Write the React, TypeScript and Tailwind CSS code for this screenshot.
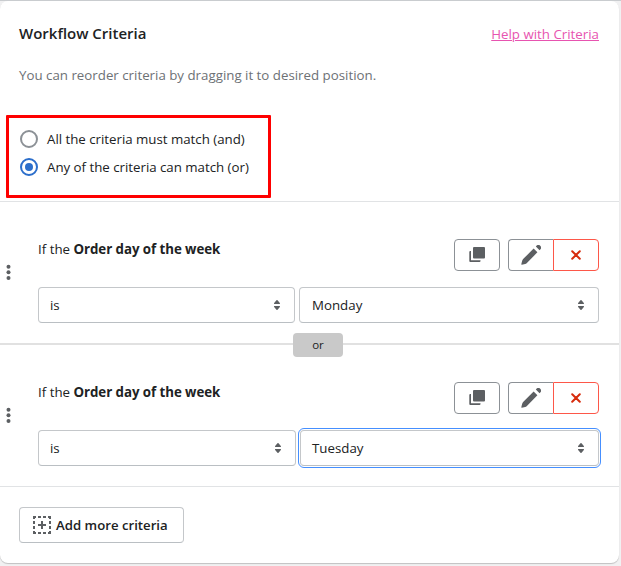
import clsx from 'clsx';

const criteria = [
  { id: 1, field: 'Order day of the week', operator: 'is', value: 'Monday', focused: false },
  { id: 2, field: 'Order day of the week', operator: 'is', value: 'Tuesday', focused: true },
];

const matchOptions = [
  { label: 'All the criteria must match (and)', checked: false },
  { label: 'Any of the criteria can match (or)', checked: true },
];

function DuplicateIcon() {
  return (
    <svg className="w-4 h-4" viewBox="0 0 16 16" fill="#5c5f62">
      <rect x="4" y="0" width="12" height="11.5" rx="1" />
      <path d="M0.3 5a1 1 0 0 1 1-1H2v9.2h9.5v.8a1 1 0 0 1-1 1H1.3a1 1 0 0 1-1-1z" />
    </svg>
  );
}

function EditIcon() {
  return (
    <svg className="w-5 h-5" viewBox="0 0 20 20" fill="#5c5f62">
      <path d="M14.846 1.403l3.752 3.753.625-.626A2.653 2.653 0 0 0 15.471.778l-.625.625zM16.4 7.35l-3.752-3.753L2.1 14.1Q1.4 14.9 1.1 16.1L.3 19.2q-.1.7.6.6l3.2-.8q1-.3 1.8-1.1L16.4 7.35z" />
    </svg>
  );
}

function RemoveIcon() {
  return (
    <svg className="w-[10px] h-[10px]" viewBox="0 0 10 10" fill="none" stroke="#d72c0d" strokeWidth="2" strokeLinecap="round">
      <path d="M1.2 1.2l7.6 7.6M8.8 1.2L1.2 8.8" />
    </svg>
  );
}

function SelectIcon() {
  return (
    <svg className="w-5 h-5" viewBox="0 0 20 20" fill="#5c5f62">
      <path d="M7.676 9h4.648c.563 0 .879-.603.53-1.014l-2.323-2.746a.708.708 0 0 0-1.062 0L7.146 7.986C6.798 8.397 7.113 9 7.676 9zm4.648 2H7.676c-.563 0-.878.603-.53 1.014l2.323 2.746c.27.32.792.32 1.062 0l2.323-2.746c.349-.411.033-1.014-.53-1.014z" />
    </svg>
  );
}

function AddIcon() {
  return (
    <svg className="w-[18px] h-[18px]" viewBox="0 0 18 18" fill="none" stroke="#5c5f62" strokeWidth="2">
      <path d="M0 1h3M5 1h3M10 1h3M15 1h3M0 17h3M5 17h3M10 17h3M15 17h3" />
      <path d="M1 0v3M1 5v3M1 10v3M1 15v3M17 0v3M17 5v3M17 10v3M17 15v3" />
      <path d="M9 5v8M5 9h8" />
    </svg>
  );
}

function DragHandle() {
  return (
    <svg className="w-[5px] h-4 ml-[6px] mt-[62px]" viewBox="0 0 5 16" fill="#5c5f62">
      <circle cx="2.5" cy="2.7" r="2" />
      <circle cx="2.5" cy="8.3" r="2" />
      <circle cx="2.5" cy="14" r="2" />
    </svg>
  );
}

function Select({ value, className }: { value: string; className: string }) {
  return (
    <button
      className={clsx(
        'flex h-9 items-center justify-between rounded border border-[#c4c7ca] border-b-[#babfc3] bg-white pr-[7px]',
        className
      )}
    >
      <span className="pt-0.5">{value}</span>
      <SelectIcon />
    </button>
  );
}

function CriteriaRow({ item }: { item: (typeof criteria)[number] }) {
  return (
    <div className="flex h-[141px]">
      <DragHandle />
      <div className="ml-[27px] w-[561px]">
        <div className="flex h-[85px] justify-between">
          <p className="mt-[37px] leading-5">
            If the <b className="font-bold tracking-[-0.05px]">{item.field}</b>
          </p>
          <div className="mt-[37px] flex">
            <button className="mr-2 flex h-8 w-[46px] items-center justify-center rounded border border-[#8c9196]">
              <DuplicateIcon />
            </button>
            <button className="flex h-8 w-[45px] items-center justify-center rounded-l border border-r-0 border-[#8c9196]">
              <EditIcon />
            </button>
            <button className="flex h-8 w-[46px] items-center justify-center rounded-r border border-[#fd5749]">
              <RemoveIcon />
            </button>
          </div>
        </div>
        <div className="flex justify-between">
          <Select value={item.operator} className={item.focused ? 'w-[258px] pl-[11px]' : 'w-[257px] pl-[11px]'} />
          <Select
            value={item.value}
            className={item.focused ? 'w-[299px] pl-[11px] outline-1 outline-offset-1 outline-[#458fff]' : 'w-[300px] pl-3'}
          />
        </div>
      </div>
    </div>
  );
}

export default function App() {
  return (
    <div className="h-[566px] w-[621px] overflow-hidden border-t border-[#c9cccf] bg-[#f1f1f2] font-['Open_Sans','Noto_Sans',sans-serif] text-[13.3px] text-[#202223]">
      <div className="h-[562px] w-[619px] rounded-lg bg-white shadow-[0_1px_1px_rgba(0,0,0,0.2)]">
        <div className="flex h-[114px] flex-col px-[19px] pt-[22px]">
          <div className="flex w-[580px] items-start justify-between">
            <h2 className="text-[15px] font-semibold leading-5">Workflow Criteria</h2>
            <a className="pt-px leading-5 text-[#e754b0] underline" href="#">Help with Criteria</a>
          </div>
          <p className="mt-[21px] leading-5 text-[#6d7175]">You can reorder criteria by dragging it to desired position.</p>
        </div>
        <div className="ml-[6px] flex h-[83px] w-[265px] flex-col gap-2 rounded-[1px] border-[3px] border-[#fe0000] pl-[11px] pt-[11px]">
          {matchOptions.map(option => (
            <label className="flex h-5 items-center gap-[9px]" key={option.label}>
              <span
                className={clsx(
                  'flex size-[18px] items-center justify-center rounded-full border-2',
                  option.checked ? 'border-[#2c6ecb]' : 'border-[#8c9196]'
                )}
              >
                {option.checked && <span className="size-2 rounded-full bg-[#2c6ecb]" />}
              </span>
              <span className="pt-0.5 tracking-[-0.02px]">{option.label}</span>
            </label>
          ))}
        </div>
        <div className="mt-[3px] border-t border-[#e1e3e5]" />
        <CriteriaRow item={criteria[0]} />
        <div className="relative h-[2px] bg-[#e1e1e1]">
          <span className="absolute left-[293px] top-[-10px] flex h-6 w-[50px] items-center justify-center rounded bg-[#c9c9c9] text-[11.5px]">
            or
          </span>
        </div>
        <CriteriaRow item={criteria[1]} />
        <div className="border-t border-[#e1e3e5]" />
        <button className="ml-[19px] mt-5 flex h-9 w-[165px] items-center gap-[5px] whitespace-nowrap rounded border border-[#c4c7ca] border-b-[#babfc3] pl-[13px] text-[13.2px] font-semibold">
          <AddIcon />
          <span className="pt-0.5">Add more criteria</span>
        </button>
      </div>
    </div>
  );
}
